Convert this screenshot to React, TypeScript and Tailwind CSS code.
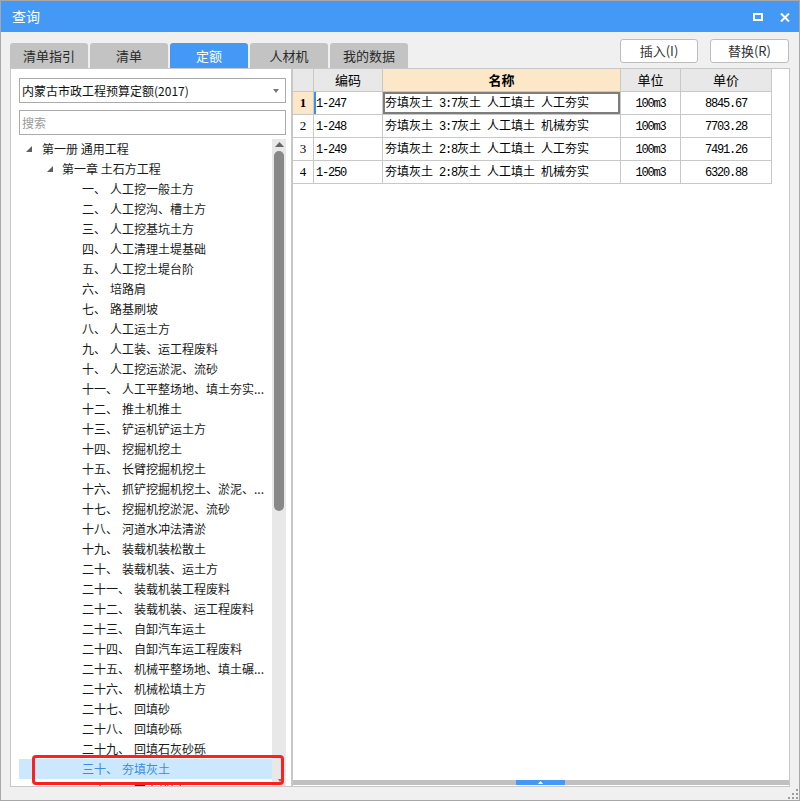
import React from 'react'

const tabs = ['清单指引', '清单', '定额', '人材机', '我的数据']

const items: [string, string][] = [
  ['一、', '人工挖一般土方'],
  ['二、', '人工挖沟、槽土方'],
  ['三、', '人工挖基坑土方'],
  ['四、', '人工清理土堤基础'],
  ['五、', '人工挖土堤台阶'],
  ['六、', '培路肩'],
  ['七、', '路基刷坡'],
  ['八、', '人工运土方'],
  ['九、', '人工装、运工程废料'],
  ['十、', '人工挖运淤泥、流砂'],
  ['十一、', '人工平整场地、填土夯实...'],
  ['十二、', '推土机推土'],
  ['十三、', '铲运机铲运土方'],
  ['十四、', '挖掘机挖土'],
  ['十五、', '长臂挖掘机挖土'],
  ['十六、', '抓铲挖掘机挖土、淤泥、...'],
  ['十七、', '挖掘机挖淤泥、流砂'],
  ['十八、', '河道水冲法清淤'],
  ['十九、', '装载机装松散土'],
  ['二十、', '装载机装、运土方'],
  ['二十一、', '装载机装工程废料'],
  ['二十二、', '装载机装、运工程废料'],
  ['二十三、', '自卸汽车运土'],
  ['二十四、', '自卸汽车运工程废料'],
  ['二十五、', '机械平整场地、填土碾...'],
  ['二十六、', '机械松填土方'],
  ['二十七、', '回填砂'],
  ['二十八、', '回填砂砾'],
  ['二十九、', '回填石灰砂砾'],
  ['三十、', '夯填灰土'],
  ['三十一、', '灰土垫层'],
]

const rows = [
  ['1', '1-247', '夯填灰土 3:7灰土 人工填土 人工夯实', '100m3', '8845.67'],
  ['2', '1-248', '夯填灰土 3:7灰土 人工填土 机械夯实', '100m3', '7703.28'],
  ['3', '1-249', '夯填灰土 2:8灰土 人工填土 人工夯实', '100m3', '7491.26'],
  ['4', '1-250', '夯填灰土 2:8灰土 人工填土 机械夯实', '100m3', '6320.88'],
]

// latin runs in a narrow mono face, like the grid's old song font
function Mixed({ text }: { text: string }) {
  const parts = text.split(/([\x20-\x7e]+)/).filter(p => p !== '')
  return (
    <span className="whitespace-pre">
      {parts.map((p, i) =>
        /^[\x20-\x7e]+$/.test(p) ? (
          <span key={i} className="font-['Liberation_Mono',monospace] tracking-[-1.2px]">{p}</span>
        ) : (
          <span key={i}>{p}</span>
        )
      )}
    </span>
  )
}

function Tri() {
  return (
    <svg width="6" height="6" viewBox="0 0 6 6" className="shrink-0">
      <polygon points="6,0 6,6 0,6" fill="#5f5f5f" />
    </svg>
  )
}

function App() {
  return (
    <div className="relative w-[800px] h-[801px] bg-[#f0f0f0] border border-[#a8a8a8] flex flex-col font-['Noto_Sans_CJK_SC',sans-serif] text-[#1a1a1a]">
      {/* title bar */}
      <div className="h-[31px] shrink-0 bg-[#4499f7] flex items-center pl-[11px] pr-[9px]">
        <span className="text-white text-[14px]">查询</span>
        <div className="ml-auto flex items-center gap-[17px] mt-[1px]">
          <svg width="10" height="8" viewBox="0 0 10 8">
            <rect x="1" y="1" width="8" height="6" fill="none" stroke="#fff" strokeWidth="2" />
          </svg>
          <svg width="10" height="9" viewBox="0 0 10 9">
            <path d="M1 0.5 L9 8.5 M9 0.5 L1 8.5" stroke="#fff" strokeWidth="2" />
          </svg>
        </div>
      </div>

      {/* tabs + buttons */}
      <div className="h-[36px] shrink-0 flex pl-[9px] pr-[9px]">
        <div className="flex items-end gap-[2px]">
          {tabs.map(t => (
            <div
              key={t}
              className={
                t === '定额'
                  ? 'w-[78px] h-[25px] rounded-t-[3px] bg-[#4499f7] text-white text-[13px] flex items-center justify-center'
                  : 'w-[78px] h-[25px] rounded-t-[3px] bg-[#c3c3c3] text-[#2a2a2a] text-[13px] flex items-center justify-center'
              }
            >
              {t}
            </div>
          ))}
        </div>
        <div className="ml-auto mt-[7px] flex gap-[12px] pr-[1px]">
          <button className="w-[78px] h-[24px] bg-white border border-[#bdbdbd] rounded-[3px] text-[13px] text-[#333]">插入(I)</button>
          <button className="w-[79px] h-[24px] bg-white border border-[#bdbdbd] rounded-[3px] text-[13px] text-[#333]">替换(R)</button>
        </div>
      </div>

      {/* content */}
      <div className="h-[719px] shrink-0 flex px-[9px]">
        {/* left panel */}
        <div className="w-[282px] border border-[#c8c8c8] bg-white flex flex-col pl-[8px] pr-[5px] overflow-hidden">
          <div className="mt-[9px] h-[25px] shrink-0 border border-[#ababab] flex items-center pl-[2px] pr-[6px] text-[12px] text-[#111]">
            <span>内蒙古市政工程预算定额(2017)</span>
            <svg width="6" height="4" viewBox="0 0 6 4" className="ml-auto">
              <polygon points="0,0 6,0 3,4" fill="#777" />
            </svg>
          </div>
          <div className="mt-[7px] h-[25px] shrink-0 border border-[#ababab] flex items-center pl-[2px] text-[12px] text-[#9a9a9a]">
            搜索
          </div>
          <div className="mt-[4px] flex-1 flex min-h-0">
            <div className="flex-1 overflow-hidden text-[12px]">
              <div className="h-[20px] flex items-center pl-[7px]">
                <Tri />
                <span className="ml-[10px]">第一册 通用工程</span>
              </div>
              <div className="h-[20px] flex items-center pl-[28px]">
                <Tri />
                <span className="ml-[9px]">第一章 土石方工程</span>
              </div>
              {items.map(([n, name]) => (
                <div
                  key={n}
                  className={
                    n === '三十、'
                      ? 'h-[20px] flex items-center pl-[63px] bg-[#cce8ff] text-[#3a8ce4] whitespace-nowrap'
                      : 'h-[20px] flex items-center pl-[63px] whitespace-nowrap'
                  }
                >
                  <span>{n}</span>
                  <span className="ml-[4px]">{name}</span>
                </div>
              ))}
            </div>
            {/* vertical scrollbar */}
            <div className="w-[14px] bg-[#e8e8e8] flex flex-col items-center">
              <svg width="9" height="5" viewBox="0 0 9 5" className="mt-[3px]">
                <polygon points="0,5 9,5 4.5,0" fill="#666" />
              </svg>
              <div className="mt-[4px] w-[10px] h-[360px] rounded-full bg-[#888]" />
              <svg width="4" height="3" viewBox="0 0 4 3" className="mt-auto mb-[4px] ml-[1px]">
                <polygon points="0,0 4,0 2,3" fill="#777" />
              </svg>
            </div>
          </div>
        </div>

        {/* right panel */}
        <div className="w-[498px] border border-[#c8c8c8] bg-white flex flex-col">
          <div className="w-[479px] text-[12px] text-black">
            <div className="flex h-[23px] bg-[#e8e8e8] text-[13px]">
              <div className="w-[21px] border-r border-b border-[#c8c8c8]" />
              <div className="w-[69px] border-r border-b border-[#c8c8c8] flex items-center justify-center">编码</div>
              <div className="w-[238px] border-r border-b border-[#c8c8c8] bg-[#fde7c9] font-bold flex items-center justify-center">名称</div>
              <div className="w-[60px] border-r border-b border-[#c8c8c8] flex items-center justify-center">单位</div>
              <div className="w-[91px] border-r border-b border-[#c8c8c8] flex items-center justify-center">单价</div>
            </div>
            {rows.map(([no, code, name, unit, price]) => (
              <div key={no} className="flex h-[23px]">
                <div
                  className={
                    no === '1'
                      ? "w-[21px] border-r border-b border-[#c8c8c8] bg-[#fde7c9] font-bold font-['Liberation_Serif',serif] text-[13px] flex items-center justify-center"
                      : "w-[21px] border-r border-b border-[#c8c8c8] font-['Liberation_Serif',serif] text-[13px] flex items-center justify-center"
                  }
                >
                  {no}
                </div>
                <div
                  className={
                    no === '1'
                      ? 'w-[69px] border-r border-b border-[#c8c8c8] flex items-center pl-[2px] shadow-[inset_2px_0_0_#3b8ff0]'
                      : 'w-[69px] border-r border-b border-[#c8c8c8] flex items-center pl-[2px]'
                  }
                >
                  <Mixed text={code} />
                </div>
                <div
                  className={
                    no === '1'
                      ? 'w-[238px] border-r border-b border-[#c8c8c8] flex items-center pl-[2px] shadow-[inset_0_0_0_2px_#7d7d7d]'
                      : 'w-[238px] border-r border-b border-[#c8c8c8] flex items-center pl-[2px]'
                  }
                >
                  <Mixed text={name} />
                </div>
                <div className="w-[60px] border-r border-b border-[#c8c8c8] flex items-center justify-center">
                  <Mixed text={unit} />
                </div>
                <div className="w-[91px] border-r border-b border-[#c8c8c8] flex items-center justify-center">
                  <Mixed text={price} />
                </div>
              </div>
            ))}
          </div>
          <div className="flex-1" />
          {/* horizontal scrollbar */}
          <div className="h-[5px] mb-[1px] bg-[#c0c0c0] flex">
            <div className="ml-[223px] w-[49px] bg-[#4499f7] flex items-center justify-center">
              <svg width="5" height="3" viewBox="0 0 5 3">
                <polygon points="0,3 5,3 2.5,0" fill="#fff" />
              </svg>
            </div>
          </div>
        </div>
      </div>

      {/* red annotation box */}
      <div className="absolute left-[31px] top-[754px] w-[252px] h-[30px] border-[3px] border-[#ff1f1f] rounded-[4px]" />

      {/* resize grip */}
      <svg width="10" height="10" viewBox="0 0 10 10" className="absolute right-[1px] bottom-[1px]">
        <rect x="8" y="0" width="2" height="2" fill="#9c9c9c" />
        <rect x="4" y="4" width="2" height="2" fill="#9c9c9c" />
        <rect x="8" y="4" width="2" height="2" fill="#9c9c9c" />
        <rect x="0" y="8" width="2" height="2" fill="#9c9c9c" />
        <rect x="4" y="8" width="2" height="2" fill="#9c9c9c" />
        <rect x="8" y="8" width="2" height="2" fill="#9c9c9c" />
      </svg>
    </div>
  )
}

export default App
